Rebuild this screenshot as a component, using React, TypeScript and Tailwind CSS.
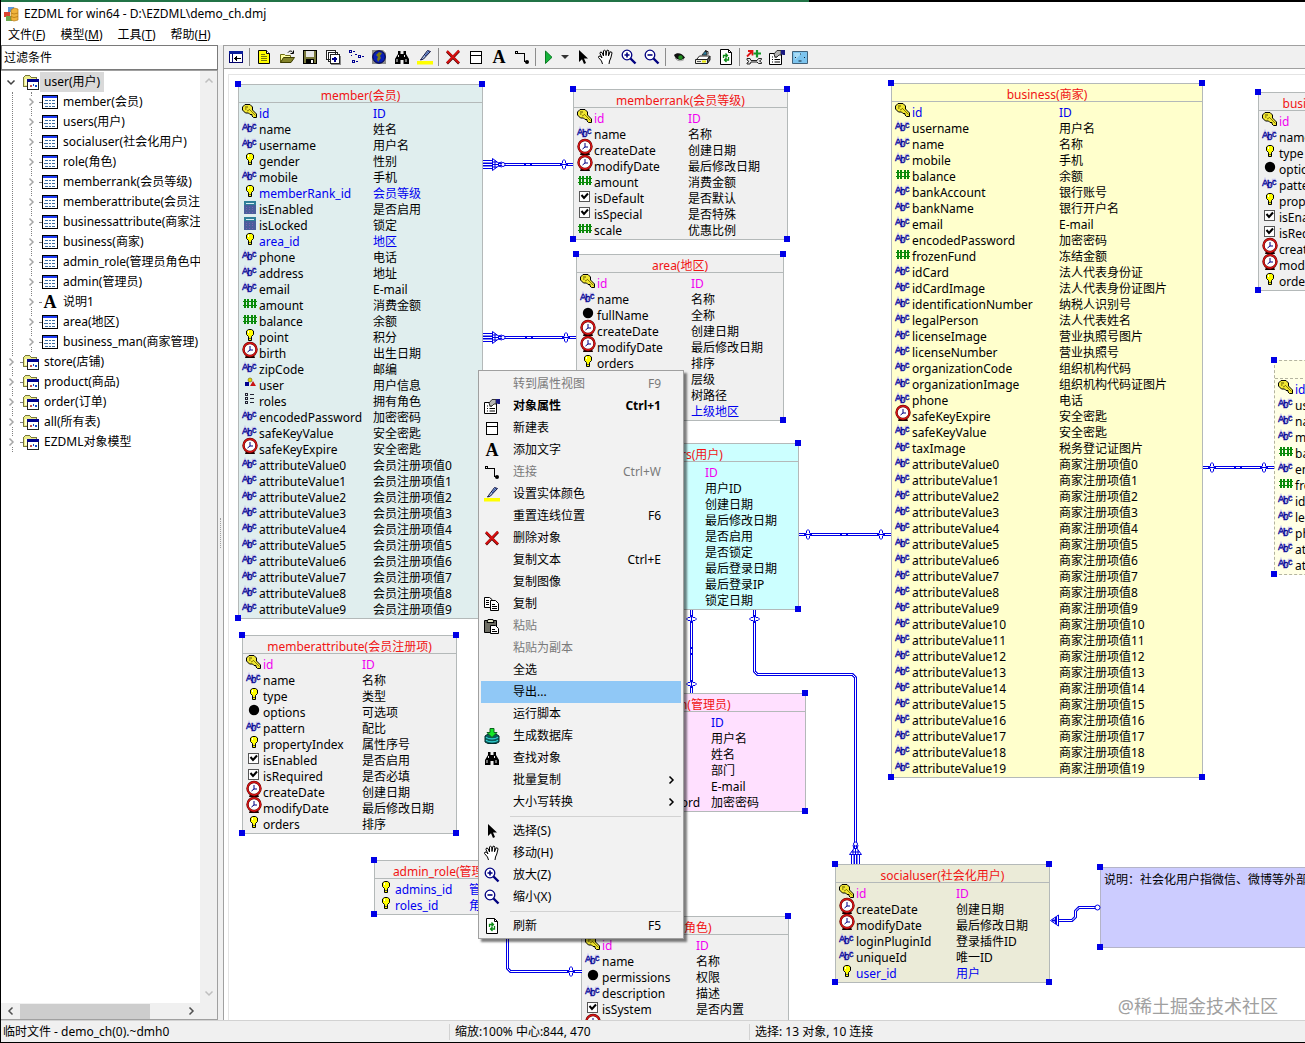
import type { ReactNode } from "react";
import clsx from "clsx";

type FieldIcon =
    | "key" | "abc" | "bulb" | "calc" | "hash" | "clock" | "check" | "dot" | "shapes" | "list";

type Tone = "blue" | "pink";

type Field = [icon: FieldIcon, name: string, label: string, tone?: Tone];

interface Entity {
    id: string;
    title: string;
    x: number;
    y: number;
    width: number;
    nameWidth: number;
    color: string;
    dashed?: boolean;
    fields: Field[];
}

const attributes = (count: number, label: string): Field[] =>
    Array.from({ length: count }, (_, i): Field => ["abc", `attributeValue${i}`, `${label}${i}`]);

const entities: Entity[] = [
    {
        id: "member", title: "member(会员)", x: 9, y: 9, width: 245, nameWidth: 114, color: "#e0eeee",
        fields: [
            ["key", "id", "ID", "blue"],
            ["abc", "name", "姓名"],
            ["abc", "username", "用户名"],
            ["bulb", "gender", "性别"],
            ["abc", "mobile", "手机"],
            ["bulb", "memberRank_id", "会员等级", "blue"],
            ["calc", "isEnabled", "是否启用"],
            ["calc", "isLocked", "锁定"],
            ["bulb", "area_id", "地区", "blue"],
            ["abc", "phone", "电话"],
            ["abc", "address", "地址"],
            ["abc", "email", "E-mail"],
            ["hash", "amount", "消费金额"],
            ["hash", "balance", "余额"],
            ["bulb", "point", "积分"],
            ["clock", "birth", "出生日期"],
            ["abc", "zipCode", "邮编"],
            ["shapes", "user", "用户信息"],
            ["list", "roles", "拥有角色"],
            ["abc", "encodedPassword", "加密密码"],
            ["abc", "safeKeyValue", "安全密匙"],
            ["clock", "safeKeyExpire", "安全密匙"],
            ...attributes(10, "会员注册项值"),
        ],
    },
    {
        id: "memberrank", title: "memberrank(会员等级)", x: 344, y: 14, width: 215, nameWidth: 94, color: "#f0f0f0",
        fields: [
            ["key", "id", "ID", "pink"],
            ["abc", "name", "名称"],
            ["clock", "createDate", "创建日期"],
            ["clock", "modifyDate", "最后修改日期"],
            ["hash", "amount", "消费金额"],
            ["check", "isDefault", "是否默认"],
            ["check", "isSpecial", "是否特殊"],
            ["hash", "scale", "优惠比例"],
        ],
    },
    {
        id: "area", title: "area(地区)", x: 347, y: 179, width: 208, nameWidth: 94, color: "#f0f0f0",
        fields: [
            ["key", "id", "ID", "pink"],
            ["abc", "name", "名称"],
            ["dot", "fullName", "全称"],
            ["clock", "createDate", "创建日期"],
            ["clock", "modifyDate", "最后修改日期"],
            ["bulb", "orders", "排序"],
            ["bulb", "grade", "层级"],
            ["abc", "treePath", "树路径"],
            ["bulb", "parent_id", "上级地区", "blue"],
        ],
    },
    {
        id: "users", title: "users(用户)", x: 356, y: 368, width: 214, nameWidth: 99, color: "#ccffff",
        fields: [
            ["key", "id", "ID", "pink"],
            ["abc", "userId", "用户ID"],
            ["clock", "createDate", "创建日期"],
            ["clock", "modifyDate", "最后修改日期"],
            ["check", "isEnabled", "是否启用"],
            ["check", "isLocked", "是否锁定"],
            ["clock", "lastLoginDate", "最后登录日期"],
            ["abc", "lastLoginIp", "最后登录IP"],
            ["clock", "lockDate", "锁定日期"],
        ],
    },
    {
        id: "admin", title: "admin(管理员)", x: 347, y: 618, width: 230, nameWidth: 114, color: "#ffe0ff",
        fields: [
            ["key", "id", "ID", "blue"],
            ["abc", "username", "用户名"],
            ["abc", "name", "姓名"],
            ["abc", "department", "部门"],
            ["abc", "email", "E-mail"],
            ["abc", "encodedPassword", "加密密码"],
        ],
    },
    {
        id: "memberattribute", title: "memberattribute(会员注册项)", x: 13, y: 560, width: 215, nameWidth: 99, color: "#f0f0f0",
        fields: [
            ["key", "id", "ID", "pink"],
            ["abc", "name", "名称"],
            ["bulb", "type", "类型"],
            ["dot", "options", "可选项"],
            ["abc", "pattern", "配比"],
            ["bulb", "propertyIndex", "属性序号"],
            ["check", "isEnabled", "是否启用"],
            ["check", "isRequired", "是否必填"],
            ["clock", "createDate", "创建日期"],
            ["clock", "modifyDate", "最后修改日期"],
            ["bulb", "orders", "排序"],
        ],
    },
    {
        id: "admin_role", title: "admin_role(管理员角色中间表)", x: 145, y: 785, width: 204, nameWidth: 74, color: "#f0f0f0",
        fields: [
            ["bulb", "admins_id", "管理员", "blue"],
            ["bulb", "roles_id", "角色", "blue"],
        ],
    },
    {
        id: "role", title: "role(角色)", x: 352, y: 841, width: 208, nameWidth: 94, color: "#f0f0f0",
        fields: [
            ["key", "id", "ID", "pink"],
            ["abc", "name", "名称"],
            ["dot", "permissions", "权限"],
            ["abc", "description", "描述"],
            ["check", "isSystem", "是否内置"],
            ["clock", "", ""],
        ],
    },
    {
        id: "business", title: "business(商家)", x: 662, y: 8, width: 312, nameWidth: 147, color: "#ffffcc",
        fields: [
            ["key", "id", "ID", "blue"],
            ["abc", "username", "用户名"],
            ["abc", "name", "名称"],
            ["abc", "mobile", "手机"],
            ["hash", "balance", "余额"],
            ["abc", "bankAccount", "银行账号"],
            ["abc", "bankName", "银行开户名"],
            ["abc", "email", "E-mail"],
            ["abc", "encodedPassword", "加密密码"],
            ["hash", "frozenFund", "冻结金额"],
            ["abc", "idCard", "法人代表身份证"],
            ["abc", "idCardImage", "法人代表身份证图片"],
            ["abc", "identificationNumber", "纳税人识别号"],
            ["abc", "legalPerson", "法人代表姓名"],
            ["abc", "licenseImage", "营业执照号图片"],
            ["abc", "licenseNumber", "营业执照号"],
            ["abc", "organizationCode", "组织机构代码"],
            ["abc", "organizationImage", "组织机构代码证图片"],
            ["abc", "phone", "电话"],
            ["clock", "safeKeyExpire", "安全密匙"],
            ["abc", "safeKeyValue", "安全密匙"],
            ["abc", "taxImage", "税务登记证图片"],
            ...attributes(20, "商家注册项值"),
        ],
    },
    {
        id: "businessattribute", title: "businessattribute(商家注册项)", x: 1029, y: 17, width: 215, nameWidth: 99, color: "#f0f0f0",
        fields: [
            ["key", "id", "ID", "pink"],
            ["abc", "name", "名称"],
            ["bulb", "type", "类型"],
            ["dot", "options", "可选项"],
            ["abc", "pattern", "配比"],
            ["bulb", "propertyIndex", "属性序号"],
            ["check", "isEnabled", "是否启用"],
            ["check", "isRequired", "是否必填"],
            ["clock", "createDate", "创建日期"],
            ["clock", "modifyDate", "最后修改日期"],
            ["bulb", "orders", "排序"],
        ],
    },
    {
        id: "business_man", title: "business_man(商家管理)", x: 1045, y: 285, width: 245, nameWidth: 114, color: "#ffffe6", dashed: true,
        fields: [
            ["key", "id", "ID", "blue"],
            ["abc", "username", "用户名"],
            ["abc", "name", "名称"],
            ["abc", "mobile", "手机"],
            ["hash", "balance", "余额"],
            ["abc", "encodedPassword", "加密密码"],
            ["hash", "frozenFund", "冻结金额"],
            ["abc", "idCard", "法人代表身份证"],
            ["abc", "legalPerson", "法人代表姓名"],
            ["abc", "phone", "电话"],
            ["abc", "attributeValue0", "商家注册项值0"],
            ["abc", "attributeValue1", "商家注册项值1"],
        ],
    },
    {
        id: "socialuser", title: "socialuser(社会化用户)", x: 606, y: 789, width: 215, nameWidth: 100, color: "#ebebd8",
        fields: [
            ["key", "id", "ID", "pink"],
            ["clock", "createDate", "创建日期"],
            ["clock", "modifyDate", "最后修改日期"],
            ["abc", "loginPluginId", "登录插件ID"],
            ["abc", "uniqueId", "唯一ID"],
            ["bulb", "user_id", "用户", "blue"],
        ],
    },
];

function Svg({ children, className }: Readonly<{ children: ReactNode; className?: string }>) {
    return (
        <svg viewBox="0 0 16 16" className={clsx("block size-4 shrink-0", className)} fill="none" aria-hidden="true">
            {children}
        </svg>
    );
}

const fieldIcons: Record<FieldIcon, ReactNode> = {
    key: (
        <>
            <path d="M3 2.500h5l2.500 2.500v3l4 4v3.500h-3l-1.500-1.500v-1.500h-2L6.500 11H3.500L.5 8V5z" fill="#f0e632" stroke="#000" />
            <path d="M3 5h3M3 7h1.500" stroke="#5a5200" strokeWidth="1.200" />
            <path d="M7 7l6.500 6.500M5 9l2-1" stroke="#8a7e00" />
        </>
    ),
    abc: (
        <g fontFamily="Liberation Sans, sans-serif" fill="#000090" stroke="#000090" strokeWidth=".3">
            <g stroke="#c8c8f0" strokeWidth="2.400" aria-hidden="true">
                <path d="M1 11l2-5 2 5M7 6v7h2M11 9V6h3" />
            </g>
            <text x="0" y="12" fontSize="9">A</text>
            <text x="5" y="14" fontSize="10">b</text>
            <text x="10" y="11" fontSize="9">c</text>
        </g>
    ),
    bulb: (
        <>
            <path d="M6.500 3.500h3l2 1.500v3.500l-2 2v4h-3v-4l-2-2V5z" fill="#ffff00" stroke="#000" />
            <path d="M7 12h2v1H7z" fill="#555" />
            <path d="M6 5h1v2H6z" fill="#fff" />
        </>
    ),
    calc: (
        <g shapeRendering="crispEdges">
            <path d="M2 3h12v13H2z" fill="#4a5f9c" />
            <path d="M2 3h12v4H2z" fill="#2f7f98" />
            <path d="M4 5h8v1H4z" fill="#d8eef4" />
            <path d="M4 9h1M7 9h1M10 9h1M4 11.500h1M7 11.500h1M10 11.500h1M4 14h1M7 14h1M10 14h1" stroke="#7c5fae" />
        </g>
    ),
    hash: (
        <g shapeRendering="crispEdges" fill="#0a8a0a">
            <path d="M1 7h14v1H1zM1 11h14v1H1z" />
            <path d="M2 5h2v9H2zM5 5h2v9H5zM9 5h2v9H9zM12 5h2v9h-2z" />
        </g>
    ),
    clock: (
        <>
            <path d="M4 13h8l1 3H3z" fill="#1a0000" />
            <circle cx="8" cy="7.500" r="6.500" fill="#fff" stroke="#5c0000" strokeWidth="2.400" />
            <circle cx="8" cy="7.500" r="6.500" stroke="#d81414" strokeWidth="1.400" />
            <path d="M8 4v4h3M8 8l-2.500 2" stroke="#000080" />
        </>
    ),
    check: (
        <g shapeRendering="crispEdges">
            <path d="M2.500 4.500h10v10h-10z" fill="#fff" stroke="#555" />
            <path d="M4.500 8l2.500 3L11 6.500" stroke="#000" strokeWidth="2" shapeRendering="auto" />
        </g>
    ),
    dot: <circle cx="8" cy="9" r="5.200" fill="#000" />,
    shapes: (
        <>
            <circle cx="8" cy="6" r="2" fill="#e8d800" stroke="#665c00" strokeWidth=".6" />
            <path d="M3 8h4v4H3z" fill="#000090" />
            <path d="M11 7l3 5H8z" fill="#c81414" />
        </>
    ),
    list: (
        <g shapeRendering="crispEdges">
            <path d="M3.500 3.500h2v2h-2zM3.500 7.500h2v2h-2zM3.500 11.500h2v2h-2z" stroke="#223" />
            <path d="M8 4.500h4M8 8.500h4M8 12.500h4" stroke="#223" />
        </g>
    ),
};

const icons = {
    panel: (
        <g shapeRendering="crispEdges">
            <path d="M1.500 2.500h13v11h-13z" fill="#fff" stroke="#00006a" />
            <path d="M1 2h14v3H1z" fill="#0a1e9c" />
            <path d="M4.500 5v9" stroke="#00006a" />
            <path d="M6 9.500h7M8.500 7v5M7.500 8v3" stroke="#000" />
        </g>
    ),
    note: (
        <>
            <path d="M2.500 1.500h8l3 3v10h-11z" fill="#ffff00" stroke="#000" />
            <path d="M10.500 1.500v3h3" fill="#fff" stroke="#000" />
            <path d="M5 5.500h4M5 7.500h6M5 9.500h6M5 11.500h6" stroke="#77770a" />
        </>
    ),
    open: (
        <>
            <path d="M1.500 13.500v-8h4l1 1h5v3" fill="#ffffa0" stroke="#6b6b10" />
            <path d="M1.500 13.500l3-5h11l-3.500 5z" fill="#84842a" stroke="#3c3c00" />
            <path d="M9 3.500c1.500-2 4-2 5 .5M14.500 1.500v3h-3" stroke="#000" />
        </>
    ),
    save: (
        <g shapeRendering="crispEdges">
            <path d="M1.500 1.500h13v13h-13z" fill="#77773a" stroke="#000" />
            <path d="M4 2h8v6H4z" fill="#e6e6e6" />
            <path d="M4 10h8v5H4z" fill="#000" />
            <path d="M9 11h2v3H9z" fill="#fff" />
        </g>
    ),
    saveAll: (
        <g shapeRendering="crispEdges">
            <path d="M6 15.500h10M15.500 7v9" stroke="#888" />
            <path d="M1.500 1.500h9v9h-9zM3.500 3.500h9v9h-9z" fill="#fff" stroke="#222" />
            <path d="M5.500 5.500h9v9h-9z" fill="#fff" stroke="#222" />
            <path d="M7 10h5M10 7.500v5M11.500 9v2" stroke="#00008c" strokeWidth="1.500" />
        </g>
    ),
    nodes: (
        <g shapeRendering="crispEdges" stroke="#000090">
            <path d="M1.500 1.500h2v2h-2zM4.500 11.500h2v2h-2zM10.500 6.500h2v2h-2z" />
            <path d="M5 2.500h2M3 6.500h1M8 12.500h2M14 7.500h2M7 5.500h2" />
        </g>
    ),
    globe: (
        <>
            <path d="M1 1h14v14H1z" fill="#8c8c8c" />
            <circle cx="8" cy="8" r="6.300" fill="#0a1eb4" stroke="#00003c" />
            <path d="M8 3l3 1-2 3 1 2-3 4-1-3 1-2-2-2z" fill="#787814" />
            <path d="M12 1h3v3z" fill="#fff" />
        </>
    ),
    find: (
        <>
            <path d="M4 2h2.500v3H9.500V2H12v3l3 5v5h-5.500v-4h-3v4H1v-5l3-5z" fill="#000" />
            <path d="M4.500 6v2M3 10v3M10.500 6v2M12 10v3" stroke="#e8e8e8" />
        </>
    ),
    color: (
        <>
            <path d="M0 12h16v3.500H0z" fill="#ffff00" />
            <path d="M4.500 9.500l6-8 3 1-7 7.500-3 1z" fill="#a9c4e4" stroke="#101040" />
            <path d="M8 7l4-5" stroke="#1c3c96" />
        </>
    ),
    remove: (
        <>
            <path d="M2 2.500l12 12M14 2L2 14.500" stroke="#4a0000" strokeWidth="2.600" />
            <path d="M2 2l12 12M14 1.500L2 14" stroke="#d81010" strokeWidth="2" />
        </>
    ),
    table: (
        <g shapeRendering="crispEdges">
            <path d="M2.500 2.500h11v12h-11z" fill="#fff" stroke="#000" />
            <path d="M2 6.500h12" stroke="#000" />
        </g>
    ),
    text: (
        <text x="8" y="14" textAnchor="middle" fontFamily="Liberation Serif, serif" fontWeight="bold" fontSize="18" fill="#000">A</text>
    ),
    link: (
        <>
            <path d="M1.500 2.500h2v2h-2zM4 4.500h6.500v8h3" stroke="#000" shapeRendering="crispEdges" />
            <circle cx="13" cy="13" r="2" fill="#000" />
        </>
    ),
    run: <path d="M4.500 2v12.500l6.500-6.200z" fill="#16b43c" stroke="#0a7a22" />,
    arrow: <path d="M4 1v12l3-2.700 2 4.700 2-1-2-4.500h4z" fill="#000" />,
    hand: (
        <path
            d="M4.500 15l-1-3-3-3.500.5-1.500 1.500.3 1.500 1.700L2 4.500l.5-1.500 1.500.5L5.500 7V2l1-1 1.200 1L8 6.500l.8-5L10 1l.8 1.200-.3 4.700 1.500-4 1.500.1.500 1-1.200 5-1.300 3-.5 3"
            fill="#fff"
            stroke="#000"
        />
    ),
    zoomIn: (
        <>
            <circle cx="6" cy="6" r="4.800" fill="#fff" stroke="#000080" strokeWidth="1.300" />
            <path d="M3.500 6h5M6 3.500v5" stroke="#000080" strokeWidth="1.600" />
            <path d="M9.500 9.500l5 5" stroke="#000080" strokeWidth="2.400" />
        </>
    ),
    zoomOut: (
        <>
            <circle cx="6" cy="6" r="4.800" fill="#fff" stroke="#000080" strokeWidth="1.300" />
            <path d="M3.500 6h5" stroke="#000080" strokeWidth="1.600" />
            <path d="M9.500 9.500l5 5" stroke="#000080" strokeWidth="2.400" />
        </>
    ),
    eye: (
        <>
            <path d="M2 6c3-3 8-2 11 2.500-3 4-9 3-11-2.500z" fill="#111" />
            <circle cx="8.500" cy="8.500" r="2.200" fill="#1f8c1f" />
            <path d="M3 9c2 3 6 3.500 9 1.500" stroke="#999" />
        </>
    ),
    print: (
        <>
            <path d="M7 6l4-5 1 5z" fill="#2c7c9c" stroke="#222" strokeWidth=".8" />
            <path d="M10 2.500h3v3" stroke="#222" />
            <path d="M1.500 10.500l3-3.500h10l-2 3.500z" fill="#fff" stroke="#222" />
            <path d="M.5 10.500h12v4H.5z" fill="#f0f0e6" stroke="#222" />
            <path d="M12.500 10.500l2.500-3.500v4l-2.500 3.500z" fill="#666" stroke="#222" />
            <path d="M7 11.500h4v2H7z" fill="#e6e600" />
            <path d="M2 12.500h4" stroke="#555" />
        </>
    ),
    refresh: (
        <>
            <path d="M2.500.5h8l3 3v12h-11z" fill="#fff" stroke="#000" />
            <path d="M10.500.5v3h3" stroke="#000" />
            <path d="M5.500 9V6.500H9M7.500 4.500l2 2-2 2M10.500 8v3H7M8.500 9l-2 2 2 2" stroke="#0a8a14" strokeWidth="1.300" />
        </>
    ),
    tools: (
        <>
            <path d="M1 7.500L5.500 3M2 2h4.500v4.500" stroke="#e01414" strokeWidth="1.800" />
            <path d="M11 1v7.500M7.500 4.500h7.500" stroke="#14962a" strokeWidth="2.200" />
            <path d="M1 9.500h3l1 2h6l1.500-2h3v1l-2 1.500 2 1.500v1h-3L11 13H5l-1 2H1v-1l2-1.500L1 11z" fill="#e6e6e6" stroke="#222" />
        </>
    ),
    props: (
        <>
            <path d="M.5 4.500h12v11H.5z" fill="#fff" stroke="#000" />
            <path d="M3 10.500h1M5.500 10.500H11M3 13h1M5.500 13H11M3 8h1M5.500 8H8" stroke="#000" />
            <path d="M5 5l3-3.500h4V6h-2L8 8H6z" fill="#b4b4b4" stroke="#333" />
            <path d="M12 1h4v5h-2l-2-1z" fill="#1a1a82" />
        </>
    ),
    screen: (
        <>
            <path d="M.5 2.500h15v12H.5z" fill="#7cc4ee" stroke="#41627a" />
            <path d="M2 4h8L3 11z" fill="#a8dcf6" />
            <path d="M3 8.500h1M12 8.500h1M8 5h1M6.500 12h3" stroke="#123" />
        </>
    ),
    copy: (
        <>
            <path d="M.5 1.500h5l2.500 2v8H.5z" fill="#fff" stroke="#000" />
            <path d="M6.500 4.500h5l3 3v7h-8z" fill="#fff" stroke="#000" />
            <path d="M2 4.500h3M2 6.500h3M2 8.500h3M8 8.500h3M8 10.500h5M8 12.500h5" stroke="#000" />
        </>
    ),
    paste: (
        <>
            <path d="M.5 2.500h12v12H.5z" fill="#6e6e64" stroke="#000" />
            <path d="M3 4.500l1-3h5l1 3z" fill="#e6e6c8" stroke="#000" />
            <path d="M6.500 7.500h5l3 3v5h-8z" fill="#fff" stroke="#000" />
            <path d="M8 11.500h3M8 13.500h5" stroke="#000" />
        </>
    ),
    database: (
        <>
            <path d="M1 8l3-2h8l3 2v6l-3 1.500H4L1 14z" fill="#0a5c5c" stroke="#002c2c" />
            <path d="M2 9c2 2.500 10 2.500 12 0M2 12c2 2.500 10 2.500 12 0" stroke="#32d2d2" strokeWidth="1.200" />
            <path d="M6 .5h4v4h3L8 9.500 3 4.500h3z" fill="#14e628" stroke="#0a641e" />
        </>
    ),
    model: (
        <g shapeRendering="crispEdges">
            <path d="M.5 12.500v-9l2-2h4l2 2h5v9z" fill="#ecec8c" stroke="#77773c" />
            <path d="M2 5h3v6H2z" fill="#ffffd0" />
            <path d="M4.500 5.500h11v10h-11z" fill="#fff" stroke="#222" />
            <path d="M4 5h12v3H4z" fill="#00008c" />
            <path d="M7 11h2v2H7z" fill="#c85050" />
            <path d="M10 10h1v2h-1zM12 11h2v2h-2z" fill="#1446c8" />
        </g>
    ),
    entity: (
        <g shapeRendering="crispEdges">
            <path d="M.5 1.500h15v13H.5z" fill="#fff" stroke="#000" />
            <path d="M1 2h14v2H1z" fill="#1e3cf0" />
            <path d="M3 6.500h3M7 6.500h2M10 6.500h3M2 9.500h4M7 9.500h2M10 9.500h3M3 12h3M7 12h2M10 12h3" stroke="#3c6ea0" />
        </g>
    ),
};

type IconName = keyof typeof icons;

const toolbar: { label: string; icon?: IconName }[] = [
    { label: "折叠面板", icon: "panel" },
    { label: "" },
    { label: "新建", icon: "note" },
    { label: "打开", icon: "open" },
    { label: "保存", icon: "save" },
    { label: "全部保存", icon: "saveAll" },
    { label: "排列", icon: "nodes" },
    { label: "数据库", icon: "globe" },
    { label: "查找", icon: "find" },
    { label: "颜色", icon: "color" },
    { label: "" },
    { label: "删除", icon: "remove" },
    { label: "新建表", icon: "table" },
    { label: "添加文字", icon: "text" },
    { label: "连接", icon: "link" },
    { label: "" },
    { label: "运行", icon: "run" },
    { label: "选择", icon: "arrow" },
    { label: "移动", icon: "hand" },
    { label: "放大", icon: "zoomIn" },
    { label: "缩小", icon: "zoomOut" },
    { label: "" },
    { label: "预览", icon: "eye" },
    { label: "打印", icon: "print" },
    { label: "刷新", icon: "refresh" },
    { label: "" },
    { label: "工具", icon: "tools" },
    { label: "属性", icon: "props" },
    { label: "全屏", icon: "screen" },
];

interface MenuEntry {
    label: string;
    icon?: IconName;
    shortcut?: string;
    disabled?: boolean;
    bold?: boolean;
    active?: boolean;
    submenu?: boolean;
}

const contextMenu: MenuEntry[][] = [
    [
        { label: "转到属性视图", shortcut: "F9", disabled: true },
        { label: "对象属性", icon: "props", shortcut: "Ctrl+1", bold: true },
        { label: "新建表", icon: "table" },
        { label: "添加文字", icon: "text" },
        { label: "连接", icon: "link", shortcut: "Ctrl+W", disabled: true },
        { label: "设置实体颜色", icon: "color" },
        { label: "重置连线位置", shortcut: "F6" },
        { label: "删除对象", icon: "remove" },
        { label: "复制文本", shortcut: "Ctrl+E" },
        { label: "复制图像" },
        { label: "复制", icon: "copy" },
        { label: "粘贴", icon: "paste", disabled: true },
        { label: "粘贴为副本", disabled: true },
        { label: "全选" },
        { label: "导出...", active: true },
        { label: "运行脚本" },
        { label: "生成数据库", icon: "database" },
        { label: "查找对象", icon: "find" },
        { label: "批量复制", submenu: true },
        { label: "大小写转换", submenu: true },
    ],
    [
        { label: "选择(S)", icon: "arrow" },
        { label: "移动(H)", icon: "hand" },
        { label: "放大(Z)", icon: "zoomIn" },
        { label: "缩小(X)", icon: "zoomOut" },
    ],
    [{ label: "刷新", icon: "refresh", shortcut: "F5" }],
];

const treeChildren: { label: string; icon: IconName }[] = [
    { label: "member(会员)", icon: "entity" },
    { label: "users(用户)", icon: "entity" },
    { label: "socialuser(社会化用户)", icon: "entity" },
    { label: "role(角色)", icon: "entity" },
    { label: "memberrank(会员等级)", icon: "entity" },
    { label: "memberattribute(会员注册项)", icon: "entity" },
    { label: "businessattribute(商家注册项)", icon: "entity" },
    { label: "business(商家)", icon: "entity" },
    { label: "admin_role(管理员角色中间表)", icon: "entity" },
    { label: "admin(管理员)", icon: "entity" },
    { label: "说明1", icon: "text" },
    { label: "area(地区)", icon: "entity" },
    { label: "business_man(商家管理)", icon: "entity" },
];

const treeRoots = ["store(店铺)", "product(商品)", "order(订单)", "all(所有表)", "EZDML对象模型"];

const menus = [
    ["文件", "F"],
    ["模型", "M"],
    ["工具", "T"],
    ["帮助", "H"],
];

function Chevron({ direction, className }: Readonly<{ direction: "up" | "down" | "left" | "right"; className?: string }>) {
    const paths = {
        up: "M1.500 6.500L5 3l3.500 3.500",
        down: "M1.500 3.500L5 7l3.500-3.500",
        left: "M6.500 1.500L3 5l3.500 3.500",
        right: "M3.500 1.500L7 5 3.500 8.500",
    };
    return (
        <svg viewBox="0 0 10 10" className={clsx("size-[10px] shrink-0", className)} fill="none" aria-hidden="true">
            <path d={paths[direction]} stroke="currentColor" strokeWidth="1.500" />
        </svg>
    );
}

function Handles() {
    return (
        <>
            <span className="absolute -left-1 -top-1 size-[6px] bg-[#0000e6]" />
            <span className="absolute -right-[3px] -top-1 size-[6px] bg-[#0000e6]" />
            <span className="absolute -bottom-[3px] -left-1 size-[6px] bg-[#0000e6]" />
            <span className="absolute -bottom-[3px] -right-[3px] size-[6px] bg-[#0000e6]" />
        </>
    );
}

function EntityBox({ entity }: Readonly<{ entity: Entity }>) {
    const border = entity.dashed ? "border-dashed border-[#b4b4a0]" : "border-[#b4b9b9]";

    return (
        <div
            className={clsx("absolute border", border)}
            style={{ left: entity.x, top: entity.y, width: entity.width, backgroundColor: entity.color }}
        >
            <h3 className={clsx("h-[18px] whitespace-nowrap border-b pt-[3px] text-center leading-4 text-[#f01414]", border)}>
                {entity.title}
            </h3>
            <table className="mt-[3px] table-fixed border-collapse" aria-label={entity.title}>
                <tbody>
                    {entity.fields.map(([icon, name, label, tone]) => (
                        <tr
                            key={name}
                            className={clsx("h-4", tone === "blue" && "text-[#0000f0]", tone === "pink" && "text-[#f000f0]")}
                        >
                            <td className="w-5 p-0 pl-[3px] align-top">
                                <div className="h-4">
                                    <Svg className="relative -top-1 overflow-visible">{fieldIcons[icon]}</Svg>
                                </div>
                            </td>
                            <td className="p-0 align-top">
                                <div className="h-4 whitespace-nowrap" style={{ width: entity.nameWidth }}>{name}</div>
                            </td>
                            <td className="whitespace-nowrap p-0 align-top">
                                <div className="h-4">{label}</div>
                            </td>
                        </tr>
                    ))}
                </tbody>
            </table>
            <Handles />
        </div>
    );
}

const wires = [
    "M254 89.500H344",
    "M254 262.500H347",
    "M570 459.500H662",
    "M974 392.500H1045",
    "M462.500 535V618",
    "M525.500 535V596.500L528.500 599.500H623.500L626.500 602.500V789",
    "M278.500 840V893.500L281.500 896.500H353",
    "M871 832.500H850L846.500 836V842L843 845.500H825",
];

// [x, y, vertical] of the "exactly one" marks
const crosses: [number, number, boolean][] = [
    [335, 89.5, false],
    [337, 262.5, false],
    [579, 459.5, false],
    [652, 459.5, false],
    [983, 392.5, false],
    [1035, 392.5, false],
    [462.5, 544, true],
    [462.5, 609, true],
    [525.5, 544, true],
    [342, 896.5, false],
];

const middles: [number, number, boolean][] = [
    [299, 89.5, false],
    [300, 262.5, false],
    [615, 459.5, false],
    [1009, 392.5, false],
    [462.5, 576, true],
];

// [x, y, rotation] of the "many" marks
const crows: [number, number, number][] = [
    [254, 89.5, 0],
    [254, 262.5, 0],
    [626.5, 789, -90],
];

function Connections() {
    return (
        <svg className="pointer-events-none absolute left-0 top-0 size-full" fill="none" aria-hidden="true">
            {wires.map((d) => (
                <g key={d}>
                    <path d={d} stroke="#0000e6" strokeWidth="3" />
                    <path d={d} stroke="#fff" strokeWidth="1" />
                </g>
            ))}
            {crosses.map(([x, y, vertical]) => (
                <g key={`${x}-${y}`} transform={`translate(${x} ${y}) rotate(${vertical ? 90 : 0})`}>
                    <path d="M0-5l1.500 1.500v2L4 0 1.500 1.500v2L0 5l-1.500-1.500v-2L-4 0l2.500-1.500v-2z" fill="#fff" stroke="#0000e6" />
                    <path d="M-4 0h8" stroke="#0000e6" />
                </g>
            ))}
            {middles.map(([x, y, vertical]) => (
                <g key={`${x}-${y}`} transform={`translate(${x} ${y}) rotate(${vertical ? 90 : 0})`}>
                    <path d="M-4 0h8" stroke="#0000e6" strokeWidth="3" />
                    <path d="M-2 0h4" stroke="#fff" />
                </g>
            ))}
            {crows.map(([x, y, angle]) => (
                <g key={`${x}-${y}`} transform={`translate(${x} ${y}) rotate(${angle})`} stroke="#0000e6">
                    <path d="M0-4h10M0-1.500h10M0 1.500h10M0 4h10" />
                    <path d="M9.500-6l6 4.500v3L9.500 6z" fill="#fff" />
                    <path d="M9-2.500h5M9 0h6M9 2.500h5M12-4v8" />
                    <path d="M15-1.500l4-1M15 1.500l4 1" />
                    <circle cx="20" cy="0" r="2" fill="#fff" />
                </g>
            ))}
            <path d="M821.500 845.500l8-5.500v11z" fill="#fff" stroke="#0000e6" />
            <path d="M823 845.500h5M827 842v7" stroke="#0000e6" strokeWidth="2" />
            <circle cx="868.500" cy="832.500" r="2.500" fill="#fff" stroke="#0000e6" />
        </svg>
    );
}

function ContextMenu() {
    return (
        <div
            role="menu"
            className="absolute left-[249px] top-[295px] w-[206px] border border-[#a0a0a0] bg-[#f2f2f2] px-[2px] pb-px pt-[2px] shadow-[3px_3px_2px_rgba(0,0,0,0.5)]"
        >
            {contextMenu.map((group, index) => (
                <div key={group[0].label}>
                    {index > 0 && <div className="ml-[29px] h-[7px] pt-[3px]"><hr className="border-[#d2d2d2]" /></div>}
                    {group.map((item) => (
                        <button
                            key={item.label}
                            type="button"
                            role="menuitem"
                            disabled={item.disabled}
                            className={clsx(
                                "flex h-[22px] w-full items-center pl-[3px] pr-[5px] text-left",
                                item.disabled && "text-[#7a7a7a]",
                                item.bold && "font-bold",
                                item.active && "bg-[#90c8f6]",
                            )}
                        >
                            <span className="w-[29px] shrink-0">{item.icon && <Svg>{icons[item.icon]}</Svg>}</span>
                            <span className="grow">{item.label}</span>
                            <span className={clsx(!item.submenu && "pr-[15px]")}>
                                {item.submenu ? <Chevron direction="right" /> : item.shortcut}
                            </span>
                        </button>
                    ))}
                </div>
            ))}
        </div>
    );
}

function Sidebar() {
    return (
        <aside className="flex w-[217px] shrink-0 flex-col">
            <input
                type="text"
                aria-label="过滤条件"
                defaultValue="过滤条件"
                className="h-[25px] w-full border border-[#7a7a7a] bg-white px-[2px] pb-[2px] outline-none"
            />
            <div className="flex min-h-0 grow flex-col border border-l-0 border-[#a0a0a0] bg-white">
                <div className="flex min-h-0 grow">
                    <div className="min-w-0 grow overflow-hidden pt-px">
                        <button type="button" className="flex h-5 items-center pl-[5px]">
                            <Chevron direction="down" className="text-[#404040]" />
                            <Svg className="ml-[7px]">{icons.model}</Svg>
                            <span className="ml-px h-5 whitespace-nowrap bg-[#d9d9d9] px-1 leading-5">user(用户)</span>
                        </button>
                        <div className="ml-[11px] border-l border-dotted border-[#808080]">
                            <ul className="ml-[18px] border-l border-dotted border-[#808080]">
                                {treeChildren.map((node) => (
                                    <li key={node.label}>
                                        <button type="button" className="-ml-[6px] flex h-5 items-center">
                                            <Chevron direction="right" className="bg-white text-[#a6a6a6]" />
                                            <span className="ml-[3px] w-[2px] border-b border-dotted border-[#808080]" />
                                            <Svg className="ml-px">{icons[node.icon]}</Svg>
                                            <span className="ml-[5px] whitespace-nowrap">{node.label}</span>
                                        </button>
                                    </li>
                                ))}
                            </ul>
                            <ul>
                                {treeRoots.map((label) => (
                                    <li key={label}>
                                        <button type="button" className="-ml-[7px] flex h-5 items-center">
                                            <Chevron direction="right" className="bg-white text-[#a6a6a6]" />
                                            <span className="ml-1 w-[2px] border-b border-dotted border-[#808080]" />
                                            <Svg className="ml-px">{icons.model}</Svg>
                                            <span className="ml-[5px] whitespace-nowrap">{label}</span>
                                        </button>
                                    </li>
                                ))}
                            </ul>
                        </div>
                    </div>
                    <div className="flex w-[17px] shrink-0 flex-col items-center justify-between bg-[#f0f0f0] py-[5px] text-[#bfbfbf]">
                        <Chevron direction="up" />
                        <Chevron direction="down" />
                    </div>
                </div>
                <div className="flex h-4 items-center bg-[#f0f0f0] pl-[5px] pr-[21px] text-[#505050]">
                    <Chevron direction="left" />
                    <div className="mx-1 h-[15px] grow">
                        <div className="h-full w-4/5 bg-[#cdcdcd]" />
                    </div>
                    <Chevron direction="right" />
                </div>
            </div>
        </aside>
    );
}

export default function App() {
    return (
        <div className="flex h-screen flex-col overflow-hidden border-b border-l border-black bg-[#f0f0f0] font-['Noto_Sans','Noto_Sans_CJK_SC',sans-serif] text-xs leading-4 text-black">
            <div className="flex h-[2px] shrink-0 bg-black">
                <div className="w-[62%] bg-[#217346]" />
            </div>
            <header className="shrink-0 bg-white">
                <div className="flex h-[23px] items-center gap-[5px] pl-[2px]">
                    <Svg>
                        <path d="M5 1h6v5H5z" fill="#5a96dc" />
                        <path d="M1 6h6v5H1z" fill="#dc4632" />
                        <path d="M3 10h6v5H3z" fill="#6eaa50" />
                        <path d="M8 4l3-2 4 1v11l-4 1-3-1z" fill="#f0b43c" stroke="#b47814" strokeWidth=".7" />
                        <path d="M8 7l3 1 4-1M8 10.500l3 1 4-1" stroke="#b47814" strokeWidth=".8" />
                    </Svg>
                    <h1>EZDML for win64 - D:\EZDML\demo_ch.dmj</h1>
                </div>
                <nav className="flex h-5 items-center gap-[15px] pl-[7px]">
                    {menus.map(([label, key]) => (
                        <button key={key} type="button">
                            {label}(<u>{key}</u>)
                        </button>
                    ))}
                </nav>
            </header>

            <div className="flex min-h-0 grow">
                <Sidebar />
                <div className="flex w-[5px] shrink-0 items-center justify-center">
                    <div className="h-[30px] border-l border-dotted border-[#a0a0a0]" />
                </div>
                <main className="flex min-w-0 grow flex-col border-l border-[#a0a0a0]">
                    <div role="toolbar" className="flex h-6 shrink-0 items-center border-b border-t border-[#a0a0a0]">
                        {toolbar.map((tool, index) =>
                            tool.icon ? (
                                <button
                                    key={tool.label}
                                    type="button"
                                    aria-label={tool.label}
                                    className={clsx("flex h-5 items-center justify-center", tool.icon === "run" ? "w-[33px]" : "w-[23px]")}
                                >
                                    <Svg>{icons[tool.icon]}</Svg>
                                    {tool.icon === "run" && (
                                        <svg viewBox="0 0 8 4" className="ml-1 h-1 w-2" aria-hidden="true">
                                            <path d="M0 0h8L4 4z" fill="#333" />
                                        </svg>
                                    )}
                                </button>
                            ) : (
                                <span key={index} className="mx-[2px] h-[18px] w-px bg-[#8c8c8c]" />
                            ),
                        )}
                    </div>
                    <div className="flex min-h-0 grow bg-white pl-1 pt-[5px]">
                        <div className="relative grow overflow-hidden border-l border-t border-[#e4e4e4]">
                            {entities.map((entity) => (
                                <EntityBox key={entity.id} entity={entity} />
                            ))}
                            <div className="absolute left-[871px] top-[792px] h-[81px] w-[260px] border border-[#b4b4c8] bg-[#ccccff] py-1 pl-[3px]">
                                <p className="whitespace-nowrap">说明：社会化用户指微信、微博等外部用户</p>
                                <Handles />
                            </div>
                            <Connections />
                            <p className="absolute bottom-[2px] right-[27px] text-lg leading-6 text-[#a0a0a0]">@稀土掘金技术社区</p>
                            <ContextMenu />
                        </div>
                    </div>
                </main>
            </div>

            <footer className="flex h-[22px] shrink-0 items-center border-t border-[#d2d2d2]">
                <span className="w-[449px] border-r border-[#d2d2d2] pl-[2px]">临时文件 - demo_ch(0).~dmh0</span>
                <span className="w-[300px] border-r border-[#d2d2d2] pl-[5px]">缩放:100% 中心:844, 470</span>
                <span className="pl-[5px]">选择: 13 对象, 10 连接</span>
            </footer>
        </div>
    );
}
